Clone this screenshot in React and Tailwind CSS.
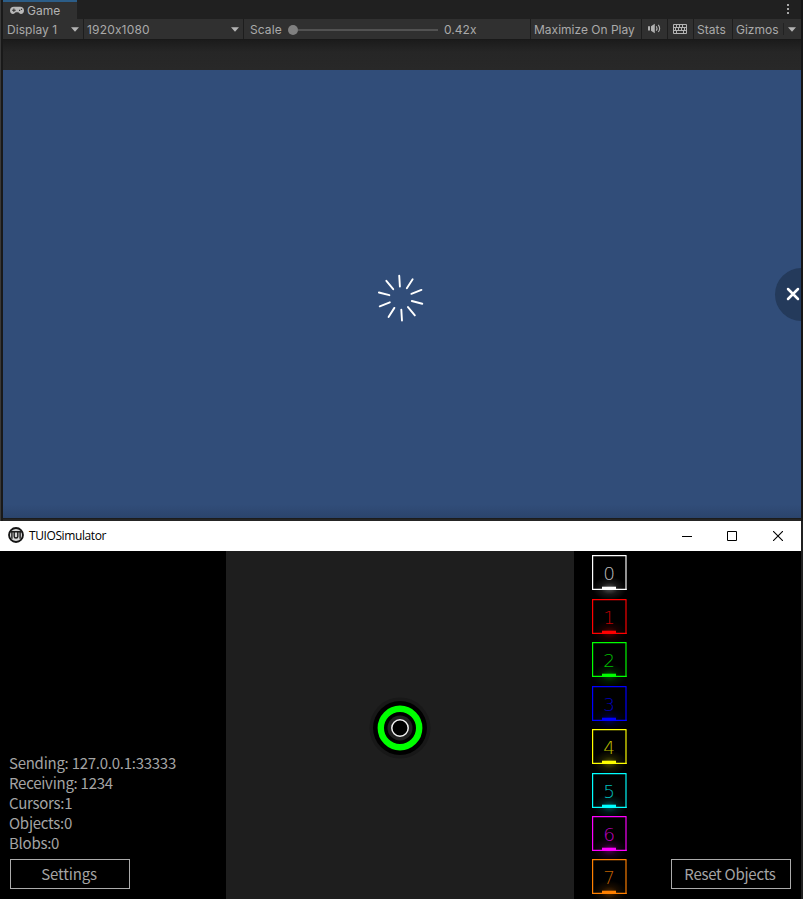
const objects = [
  { n: 0, c: '#ffffff' },
  { n: 1, c: '#ff0000' },
  { n: 2, c: '#00ff00' },
  { n: 3, c: '#0000ff' },
  { n: 4, c: '#ffff00' },
  { n: 5, c: '#00ffff' },
  { n: 6, c: '#ff00ff' },
  { n: 7, c: '#ff8000' },
];

const spokes = [0, 1, 2, 3, 4, 5, 6, 7, 8, 9];

function Arrow({ className = '' }) {
  return (
    <svg className={`block h-[5px] w-[8px] shrink-0 ${className}`} viewBox="0 0 8 5">
      <path d="M0 0.3H8L4 4.7Z" fill="#b4b4b4" />
    </svg>
  );
}

function Gamepad() {
  return (
    <svg className="block h-[9px] w-[14px] shrink-0" viewBox="0 0 14 9">
      <path fillRule="evenodd" fill="#b8b8b8" d="M4 0.8H10C12.6 0.8 14 2.4 14 4.5S12.7 8 11 8C9.6 8 9 6.8 8.3 6.2H5.7C5 6.8 4.4 8 3 8C1.3 8 0 6.6 0 4.5S1.4 0.8 4 0.8ZM3.4 2.4V3.7H2.1V4.7H3.4V6H4.4V4.7H5.7V3.7H4.4V2.4ZM9 3.7V4.9H10.2V3.7ZM10.9 2.7V3.9H12.1V2.7Z" />
    </svg>
  );
}

function Toolbar() {
  return (
    <div className="flex h-[20px] items-stretch bg-[#303030] text-[12px] leading-[22px] text-[#aaaaaa]">
      <div className="flex w-[81px] items-center border-r border-[#1d1d1d] pl-[4px] pr-[4px]">
        <span className="pt-[2px] tracking-[0.05px]">Display 1</span>
        <Arrow className="ml-auto" />
      </div>
      <div className="flex w-[160px] items-center border-r border-[#1d1d1d] pl-[3px] pr-[4px]">
        <span className="pt-[2px] tracking-[0.17px]">1920x1080</span>
        <Arrow className="ml-auto" />
      </div>
      <div className="flex w-[287px] items-center border-r border-[#1d1d1d] pl-[6px]">
        <span className="w-[38px] pt-[2px] tracking-[0.1px]">Scale</span>
        <span className="mt-px h-[10px] w-[10px] rounded-full bg-[#808080]" />
        <span className="mt-px h-[2px] w-[140px] bg-[#525252]" />
        <span className="ml-[6px] pt-[2px] tracking-[0.05px]">0.42x</span>
      </div>
      <div className="w-[111px] border-r border-[#1d1d1d] pl-[3px] whitespace-nowrap">Maximize On Play</div>
      <div className="flex w-[26px] border-r border-[#1d1d1d] pl-[6px] pt-[4px]">
        <svg className="block h-[11px] w-[14px]" viewBox="0 0 14 11">
          <path d="M0 3.3H2V7.6H0ZM3 3.2L6.8 0.7V10.2L3 7.7Z" fill="#b0b0b0" />
          <path d="M8.3 3.2Q9.7 5.4 8.3 7.7M10.3 1.8Q13 5.4 10.3 9" fill="none" stroke="#b0b0b0" strokeWidth="1.1" />
        </svg>
      </div>
      <div className="flex w-[26px] border-r border-[#1d1d1d] pl-[5px] pt-[5px]">
        <svg className="block h-[10px] w-[14px]" viewBox="0 0 14 10">
          <path d="M0.5 0.5H13.5V9.5H0.5ZM0.5 3.5H13.5M0.5 6.5H13.5M3.5 0.5V3.5M6.5 0.5V3.5M9.5 0.5V3.5M2.5 3.5V6.5M5.5 3.5V6.5M8.5 3.5V6.5M11.5 3.5V6.5M3.5 6.5V9.5M10.5 6.5V9.5" fill="none" stroke="#b4b4b4" />
        </svg>
      </div>
      <div className="w-[39px] border-r border-[#1d1d1d] pl-[3px] tracking-[0.05px]">Stats</div>
      <div className="flex flex-1 items-center pl-[3px] pr-[5px]">
        <span className="pt-[2px]">Gizmos</span>
        <span className="ml-auto h-[12px] w-px bg-[#222222]" />
        <Arrow className="ml-[4px]" />
      </div>
    </div>
  );
}

function GameView() {
  return (
    <div className="flex h-[521px] w-[803px] bg-[#191919] font-['Inter',sans-serif]">
      <div className="h-full w-[3px] shrink-0 border-l border-[#383838] bg-[#191919]" />
      <div className="flex h-full w-[798px] flex-col">
        <div className="flex h-[19px] shrink-0 justify-between bg-[#202020]">
          <div className="flex w-[74px] items-center gap-[3px] border-t-2 border-[#2c5d87] bg-[#303030] pl-[7px] text-[12px] leading-[16px] text-[#b4b4b4]">
            <Gamepad />
            <span>Game</span>
          </div>
          <div className="flex w-[26px] flex-col items-center gap-[2px] pt-[4px]">
            <span className="h-[2px] w-[2px] bg-[#a8a8a8]" />
            <span className="h-[2px] w-[2px] bg-[#a8a8a8]" />
            <span className="h-[2px] w-[2px] bg-[#a8a8a8]" />
          </div>
        </div>
        <Toolbar />
        <div className="h-[31px] shrink-0 border-t border-[#191919] bg-linear-to-b from-[#1b1b1b] via-[#262626] via-40% to-[#282828]" />
        <div className="flex h-[448px] shrink-0 overflow-hidden bg-linear-to-b from-[#314d79] from-97% to-[#2b446c]">
          <svg className="ml-[373px] mt-[204px] block h-[48px] w-[48px] shrink-0" viewBox="-24 -24 48 48">
            {spokes.map((i) => (
              <path key={i} d="M0 -11.6V-22.4" stroke="#fff" strokeWidth="1.9" strokeLinecap="round" transform={`translate(0.6 0.1) rotate(${i * 36 - 3.5})`} />
            ))}
          </svg>
          <div className="ml-[350.5px] mt-[197.5px] flex h-[53px] w-[53px] shrink-0 items-center rounded-full bg-[#243a5b] pl-[11.2px]">
            <svg className="block h-[14px] w-[14px]" viewBox="0 0 14 14">
              <path d="M2 2L12 12M12 2L2 12" stroke="#fff" strokeWidth="2.5" strokeLinecap="round" />
            </svg>
          </div>
        </div>
        <div className="h-[3px] shrink-0 border-t border-[#1c1c1c] bg-[#252525]" />
      </div>
      <div className="h-full flex-1 bg-[#161616]" />
    </div>
  );
}

function TitleBar() {
  return (
    <div className="flex h-[30px] shrink-0 items-center bg-white pl-[8px] font-['Open_Sans',sans-serif] text-black">
      <svg className="mb-[2px] block h-[16px] w-[16px]" viewBox="0 0 16 16">
        <circle cx="8" cy="8" r="7" fill="#d7d7d7" stroke="#141414" strokeWidth="1.8" />
        <path d="M2 4.8H14M3.9 5V11.7M6.2 5V9.5Q6.2 11 8 11T9.8 9.5V5M12.1 5V11.7" fill="none" stroke="#1d1d1d" strokeWidth="1.4" />
      </svg>
      <span className="ml-[5px] text-[12px] leading-[16px] tracking-[-0.4px]">TUIOSimulator</span>
      <div className="ml-auto flex items-center pr-[18px]">
        <svg className="block h-[10px] w-[10px]" viewBox="0 0 10 10" shapeRendering="crispEdges"><path d="M0 5.5H10" stroke="#000" /></svg>
        <svg className="ml-[35px] block h-[10px] w-[10px]" viewBox="0 0 10 10"><path d="M0.5 0.5H9.5V9.5H0.5Z" fill="none" stroke="#000" /></svg>
        <svg className="ml-[36px] block h-[10px] w-[10px]" viewBox="0 0 10 10"><path d="M0 0L10 10M10 0L0 10" stroke="#000" strokeWidth="1.1" /></svg>
      </div>
    </div>
  );
}

function ObjectTile({ n, c }) {
  return (
    <svg className="block h-[43.45px] w-[51px] shrink-0" viewBox="0 0 51 43.45">
      <defs>
        <radialGradient id={`glow${n}`}>
          <stop offset="0" stopColor={c} stopOpacity="0.32" />
          <stop offset="0.5" stopColor={c} stopOpacity="0.09" />
          <stop offset="1" stopColor={c} stopOpacity="0" />
        </radialGradient>
      </defs>
      <ellipse cx="25.5" cy="33.5" rx="17" ry="12" fill={`url(#glow${n})`} />
      <path d="M8.6 34.4V0.6H42.4" fill="none" stroke={c} strokeWidth="1.2" />
      <path d="M42 0.6V34.4" fill="none" stroke={c} strokeWidth="1.6" strokeOpacity="0.72" />
      <path d="M8 34.4H42.8" fill="none" stroke={c} strokeWidth="1.2" />
      <path d="M18 31.7H32V34.8H18Z" fill={c} />
      <text x="25.2" y="25" textAnchor="middle" fill={c} fillOpacity="0.75" className="font-['DejaVu_Sans','DejaVu_Sans_Light',sans-serif] text-[18.5px] font-extralight">{n}</text>
    </svg>
  );
}

function Simulator() {
  return (
    <div className="flex h-[378px] w-[803px] bg-[#202020]">
      <div className="flex h-full w-[801px] flex-col">
        <TitleBar />
        <div className="flex h-[348px] overflow-hidden bg-black font-['Noto_Sans_CJK_SC',sans-serif] text-[#a4a4a4]">
          <div className="flex w-[226.4px] flex-col justify-end pb-[10px] pl-[9px] text-[15px] leading-[20px] tracking-[-0.26px]">
            <div className="whitespace-nowrap">Sending: 127.0.0.1:33333</div>
            <div>Receiving: 1234</div>
            <div>Cursors:1</div>
            <div>Objects:0</div>
            <div>Blobs:0</div>
            <button className="ml-px mt-[6px] h-[30px] w-[120px] border border-[#acacac] pr-[2px] leading-[28px] tracking-[-0.15px]">Settings</button>
          </div>
          <div className="flex w-[348px] bg-[#1e1e1e] pl-[142.6px] pt-[146px]">
            <svg className="block h-[62px] w-[62px]" viewBox="-31 -31 62 62">
              <circle r="30.5" fill="#181818" />
              <circle r="27" fill="#000" />
              <circle r="19.2" fill="none" stroke="#00ff00" strokeWidth="6.4" />
              <circle r="12.5" fill="#202020" />
              <circle r="8.2" fill="#000" stroke="#f0f0f0" strokeWidth="1.5" />
            </svg>
          </div>
          <div className="flex w-[96.6px] flex-col pl-[9.6px] pt-[4.4px]">
            {objects.map((o) => <ObjectTile key={o.n} {...o} />)}
          </div>
          <div className="flex flex-1 items-end pb-[10px]">
            <button className="h-[30px] w-[120px] border border-[#acacac] pr-[2px] text-[15px] leading-[28px] tracking-[-0.26px] whitespace-nowrap">Reset Objects</button>
          </div>
        </div>
      </div>
    </div>
  );
}

export default function App() {
  return (
    <div className="h-[899px] w-[803px] overflow-hidden bg-black">
      <GameView />
      <Simulator />
    </div>
  );
}
